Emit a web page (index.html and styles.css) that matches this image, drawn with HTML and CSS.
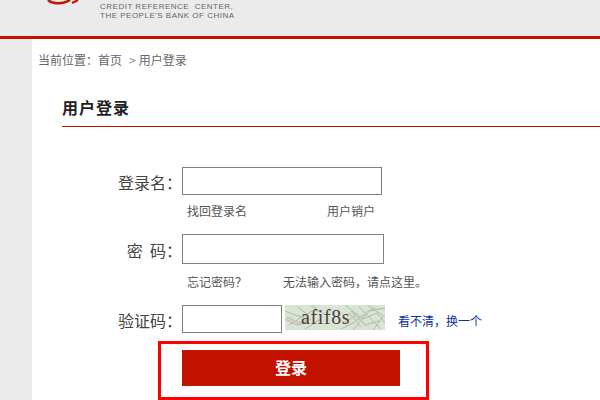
FILE: index.html
```html
<!DOCTYPE html>
<html lang="zh-CN">
<head>
  <meta charset="UTF-8">
  <title>用户登录</title>
  <link rel="stylesheet" href="styles.css">
</head>
<body>
  <div class="header">
    <svg class="logo" width="60" height="8" viewBox="0 0 60 8">
      <path d="M18 0 C22 4 33 4.500 40 0" fill="none" stroke="#c41200" stroke-width="2.500"/>
      <path d="M42 3 L48 0" fill="none" stroke="#c41200" stroke-width="2"/>
    </svg>
    <div class="org-name">
      <div>CREDIT REFERENCE&nbsp; CENTER,</div>
      <div>THE PEOPLE'S BANK OF CHINA</div>
    </div>
  </div>

  <div class="main">
    <div class="crumb">当前位置：首页<span class="crumb-arrow">&gt;</span>用户登录</div>
    <div class="content">
      <h2 class="title">用户登录</h2>

      <div class="form">
        <div class="row">
          <label class="label">登录名：</label>
          <input class="input" type="text">
        </div>
        <div class="links">
          <span class="link-first">找回登录名</span>
          <span>用户销户</span>
        </div>

        <div class="row row-wide">
          <label class="label">密&nbsp; 码：</label>
          <input class="input input-wide" type="password">
        </div>
        <div class="links links-second">
          <span class="link-second">忘记密码？</span>
          <span>无法输入密码，请点这里。</span>
        </div>

        <div class="row row-code">
          <label class="label">验证码：</label>
          <input class="input input-code" type="text">
          <div class="captcha">
            <svg class="captcha-bg" width="100" height="25" viewBox="0 0 100 25">
              <rect width="100" height="25" fill="#d8e4d4"/>
              <path d="M0 6 L10 10 L18 12 L30 4 M4 20 L22 9 L12 2 M20 24 L36 14 M0 14 L12 20 L24 17 M26 0 L40 10 M60 0 L78 14 L92 8 L100 18 M68 25 L84 6 L100 3 M74 2 L96 24 M58 18 L72 10 M88 25 L98 12 M64 8 L76 22 M82 0 L100 12 M56 24 L70 17" fill="none" stroke="#b4b8a8" stroke-width="1"/>
              <path d="M2 12 L14 18 L26 14 M66 6 L80 20 L94 16 M70 16 L90 2" fill="none" stroke="#c6c9ba" stroke-width="2"/>
            </svg>
            <span class="captcha-text">afif8s</span>
          </div>
          <span class="refresh">看不清，换一个</span>
        </div>

        <div class="submit-box">
          <button class="submit">登录</button>
        </div>
      </div>
    </div>
  </div>
</body>
</html>
```

FILE: styles.css
```css
html, body {
  margin: 0;
  padding: 0;
}

body {
  width: 600px;
  height: 400px;
  overflow: hidden;
  background: #ebebeb;
  color: #555;
  font-family: "Noto Sans CJK SC", "Liberation Sans", sans-serif;
  font-size: 12px;
}

.header {
  position: relative;
  height: 36px;
  border-bottom: 3px solid #c41200;
}

.logo {
  position: absolute;
  left: 30px;
  top: 0;
}

.org-name {
  padding: 2px 0 0 100px;
  font-family: "Liberation Sans", sans-serif;
  font-size: 8px;
  line-height: 9px;
  letter-spacing: 0.5px;
  color: #666;
}

.main {
  margin-left: 32px;
  height: 361px;
  background: #fff;
}

.crumb {
  padding: 12px 0 0 6px;
  height: 21px;
  line-height: 17px;
  color: #666;
}

.crumb-arrow {
  margin: 0 3px 0 7px;
  color: #888;
}

.content {
  padding: 24px 0 0 30px;
}

.title {
  margin: 0;
  height: 30px;
  line-height: 22px;
  font-size: 16px;
  font-weight: bold;
  letter-spacing: 1px;
  color: #222;
  border-bottom: 1px solid #c41200;
}

.form {
  padding-top: 40px;
}

.row {
  display: flex;
  align-items: center;
  height: 28px;
}

.row-wide {
  height: 30px;
}

.label {
  width: 120px;
  padding-top: 2px;
  text-align: right;
  font-size: 16px;
  color: #444;
}

.input {
  box-sizing: border-box;
  width: 200px;
  height: 28px;
  margin: 0;
  border: 1px solid #808080;
  background: #fff;
}

.input-wide {
  width: 202px;
  height: 30px;
}

.input-code {
  width: 100px;
}

.links {
  display: flex;
  padding: 7px 0 0 125px;
  height: 32px;
  line-height: 17px;
  color: #555;
}

.links-second {
  padding-top: 9px;
}

.link-first {
  width: 140px;
}

.link-second {
  width: 96px;
}

.captcha {
  position: relative;
  width: 100px;
  height: 25px;
  margin: 0 0 3px 3px;
}

.captcha-bg {
  display: block;
}

.captcha-text {
  position: absolute;
  left: 16px;
  top: 0;
  font-family: "Liberation Serif", serif;
  font-size: 20px;
  line-height: 25px;
  letter-spacing: 0.6px;
  color: #4e3e3c;
}

.refresh {
  margin: 3px 0 0 13px;
  color: #0f2fa8;
}

.submit-box {
  box-sizing: border-box;
  width: 271px;
  height: 59px;
  margin: 8px 0 0 96px;
  padding: 6px 0 0 21px;
  border: 3px solid #f00;
}

.submit {
  display: block;
  width: 218px;
  height: 36px;
  padding: 0 0 3px;
  border: none;
  background: #c41200;
  color: #fff;
  font-family: "Noto Sans CJK SC", sans-serif;
  font-size: 16px;
  font-weight: bold;
}
```
